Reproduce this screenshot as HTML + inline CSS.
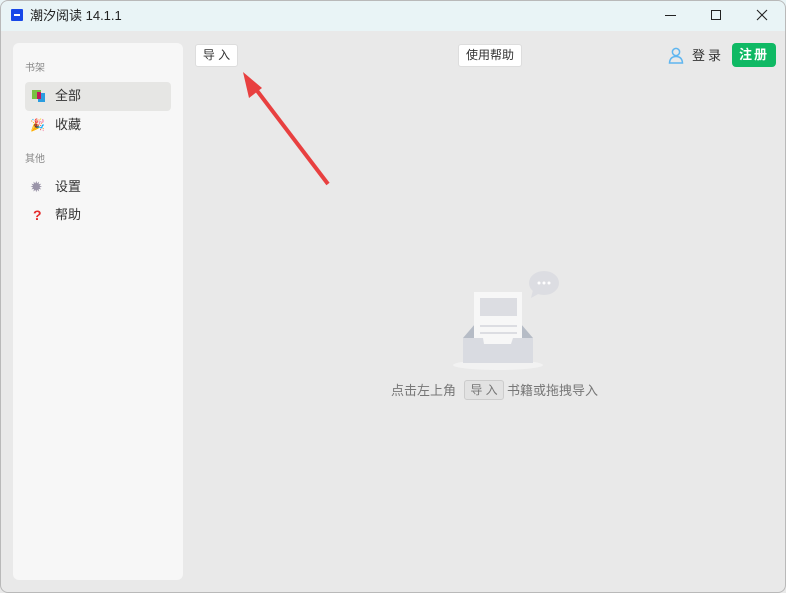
<!DOCTYPE html>
<html><head><meta charset="utf-8"><style>
*{margin:0;padding:0;box-sizing:border-box}
body{width:786px;height:593px;overflow:hidden;background:#e9e9e9;font-family:"Liberation Sans","Noto Sans CJK SC",sans-serif;position:relative;color:#333}
.win{position:absolute;left:0;top:0;width:786px;height:593px;overflow:hidden;background:#e9e9e9}
.bd{position:absolute;left:0;top:0;width:786px;height:593px;border:1px solid #b9b9b9;border-radius:8px;pointer-events:none}
.tb{position:absolute;left:0;top:0;width:786px;height:31px;background:#e9f4f6}
.t{position:absolute;font-size:13px;white-space:nowrap;line-height:1;}
.side{position:absolute;left:13px;top:43px;width:170px;height:537px;background:#f7f7f7;border-radius:6px}
.btn{position:absolute;background:#fff;border:1px solid #ddd;border-radius:3px;font-size:12px;text-align:center;color:#333}
</style></head><body><div class="win">
<div class="tb"></div>
<div style="position:absolute;left:11px;top:9px;width:12px;height:12px;background:#1747e8;border-radius:1px"></div>
<div style="position:absolute;left:14px;top:14px;width:6px;height:1.5px;background:#fff"></div>
<div class="t" style="left:30px;top:9px;font-size:13px;color:#222">潮汐阅读 14.1.1</div>
<div style="position:absolute;left:665px;top:15px;width:11px;height:1px;background:#222"></div>
<div style="position:absolute;left:711px;top:10px;width:10px;height:10px;border:1px solid #222"></div>
<svg style="position:absolute;left:756px;top:9px" width="12" height="12"><path d="M1 1L11 11M11 1L1 11" stroke="#222" stroke-width="1.1"/></svg>
<div class="side"></div>
<div class="t" style="left:25px;top:64px;font-size:10px;color:#888">书架</div>
<div style="position:absolute;left:25px;top:82px;width:146px;height:29px;background:#e6e6e4;border-radius:4px"></div>
<div style="position:absolute;left:32px;top:90px;width:9px;height:9px;background:#7ac143"></div>
<div style="position:absolute;left:38px;top:93px;width:7px;height:9px;background:#2a9de0"></div>
<div style="position:absolute;left:37px;top:92px;width:4px;height:7px;background:#c2185b"></div>
<div class="t" style="left:55px;top:89px;font-size:13px">全部</div>
<div class="t" style="left:30px;top:119px;font-size:12px">🎉</div>
<div class="t" style="left:55px;top:118px;font-size:13px">收藏</div>
<div class="t" style="left:25px;top:155px;font-size:10px;color:#888">其他</div>
<div class="t" style="left:30px;top:180px;font-size:15px;color:#9a94a8">✹</div>
<div class="t" style="left:55px;top:180px;font-size:13px">设置</div>
<div class="t" style="left:33px;top:208px;font-size:14px;color:#e52b2b;font-weight:bold">?</div>
<div class="t" style="left:55px;top:208px;font-size:13px">帮助</div>
<div class="btn" style="left:195px;top:44px;width:43px;height:23px;line-height:21px">导 入</div>
<div class="btn" style="left:458px;top:44px;width:64px;height:23px;line-height:21px">使用帮助</div>
<svg style="position:absolute;left:668px;top:47px" width="16" height="17"><circle cx="8" cy="5" r="3.6" fill="none" stroke="#5fb6f0" stroke-width="1.5"/><path d="M1.5 16 Q2 9.5 8 9.5 Q14 9.5 14.5 16Z" fill="none" stroke="#5fb6f0" stroke-width="1.5"/></svg>
<div class="t" style="left:692px;top:49px;font-size:13px;letter-spacing:3px">登录</div>
<div style="position:absolute;left:732px;top:43px;width:44px;height:24px;background:#0fb964;border-radius:4px;color:#fff;font-size:13px;font-weight:bold;text-align:center;line-height:24px;letter-spacing:2px">注册</div>
<svg style="position:absolute;left:0;top:0" width="786" height="593">
<line x1="328" y1="184" x2="255" y2="88" stroke="#e84040" stroke-width="4"/>
<polygon points="243,72 249,98 262,88" fill="#e84040"/>
<ellipse cx="498" cy="365" rx="45" ry="5" fill="#f2f2f2"/>
<path d="M463 338 L475 324 L521 324 L533 338Z" fill="#b6bcc6"/>
<rect x="474" y="292" width="48" height="53" fill="#f7f7f7"/>
<rect x="480" y="298" width="37" height="18" fill="#dcdde2"/>
<rect x="480" y="325" width="37" height="2" fill="#dcdde2"/>
<rect x="480" y="332" width="37" height="2" fill="#dcdde2"/>
<path d="M463 338 L483 338 L484 344 L511 344 L513 338 L533 338 L533 363 L463 363Z" fill="#d9dbe1"/>
<ellipse cx="544" cy="283" rx="15" ry="12" fill="#dcdde2"/>
<path d="M533 290 L531 298 L540 293Z" fill="#dcdde2"/>
<circle cx="539" cy="283" r="1.5" fill="#fff"/><circle cx="544" cy="283" r="1.5" fill="#fff"/><circle cx="549" cy="283" r="1.5" fill="#fff"/>
</svg>
<div class="t" style="left:391px;top:384px;font-size:13px;color:#777">点击左上角</div>
<div style="position:absolute;left:464px;top:380px;width:40px;height:20px;background:#e2e2e2;border:1px solid #ccc;border-radius:3px;font-size:12px;color:#777;text-align:center;line-height:18px">导 入</div>
<div class="t" style="left:507px;top:384px;font-size:13px;color:#777">书籍或拖拽导入</div>
<div class="bd"></div>
</div></body></html>
